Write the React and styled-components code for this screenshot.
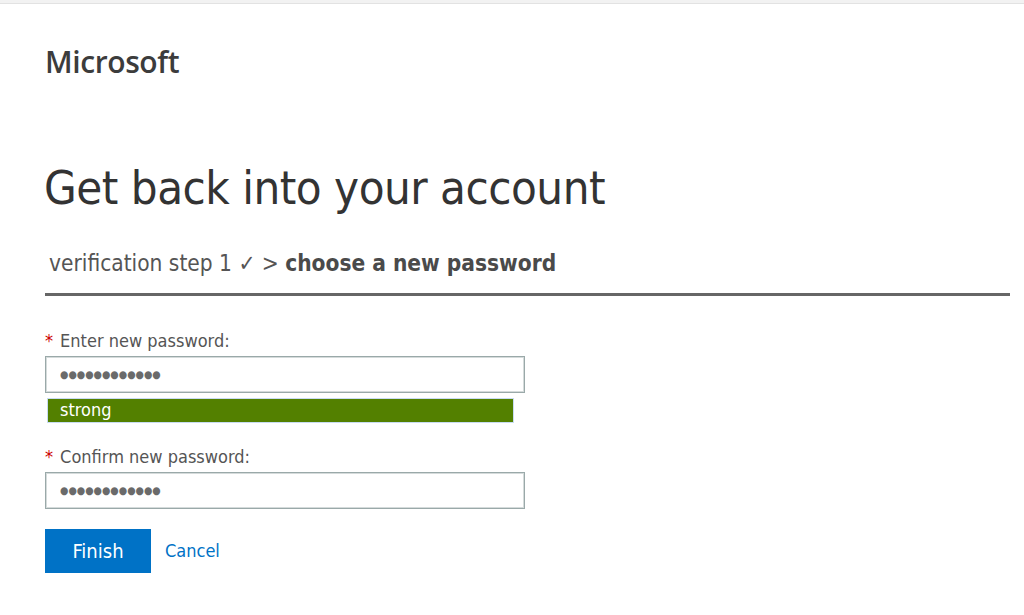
import React from 'react'
import styled, { createGlobalStyle } from 'styled-components'

const Global = createGlobalStyle`
    html, body {
        margin: 0;
        padding: 0;
        background: #fff;
    }
    body {
        font-family: "DejaVu Sans Condensed", "DejaVu Sans", sans-serif;
        color: #333;
    }
`;

const TopEdge = styled.div`
    height: 3px;
    background: #f2f2f2;
    border-bottom: 1px solid #e2e2e2;
`;

const Page = styled.div`
    padding: 0 14px 0 45px;
`;

const Logo = styled.div`
    font-family: "Open Sans", sans-serif;
    font-weight: 600;
    font-size: 30px;
    letter-spacing: -0.4px;
    color: #3c3c3c;
    line-height: 1;
    margin-top: 43px;
`;

const Title = styled.h1`
    margin: 87px 0 0 -1px;
    font-weight: 400;
    font-size: 47px;
    letter-spacing: -0.5px;
    line-height: 1;
    color: #333;
`;

const Steps = styled.div`
    margin-top: 41px;
    padding: 0 0 18px 4px;
    font-size: 22.5px;
    line-height: 1;
    color: #555;
    border-bottom: 3px solid #666;

    b {
        font-weight: 700;
        color: #4a4a4a;
    }
`;

const Form = styled.form`
    margin-top: 36px;
    width: 480px;
`;

const Field = styled.div`
    display: flex;
    flex-direction: column;
    margin-bottom: ${p => p.gap || 0}px;
`;

const Label = styled.label`
    font-size: 18px;
    line-height: 1;
    color: #555;
    margin-bottom: 6px;

    span {
        color: #c00;
        margin-right: 7px;
    }
`;

const Input = styled.input`
    box-sizing: border-box;
    width: 480px;
    height: 37px;
    border: 1px solid #9aa9a9;
    box-shadow: inset 0 0 0 1px #d5dbdb;
    padding: 0 14px;
    font-size: 10.7px;
    color: #6a6a6a;
    outline: none;
    font-family: inherit;
`;

const Strength = styled.div`
    box-sizing: border-box;
    margin: 5px 0 0 2px;
    width: 467px;
    height: 25px;
    background: #538000;
    border: 1px solid #c8dcf2;
    color: #fff;
    font-size: 18px;
    line-height: 22px;
    padding-left: 12px;
`;

const Actions = styled.div`
    display: flex;
    align-items: center;
    gap: 14px;
    margin-top: 20px;
`;

const Button = styled.button`
    width: 106px;
    height: 44px;
    border: none;
    background: #0072c6;
    color: #fff;
    font-family: inherit;
    font-size: 20px;
`;

const Link = styled.a`
    color: #0072c6;
    font-size: 18px;
    text-decoration: none;
`;

const dots = '\u25CF'.repeat(12);

export default function App() {
    return (
        <>
            <Global />
            <TopEdge />
            <Page>
                <Logo>Microsoft</Logo>
                <Title>Get back into your account</Title>
                <Steps>verification step 1 ✓ &gt; <b>choose a new password</b></Steps>
                <Form>
                    <Field gap={25}>
                        <Label><span>*</span>Enter new password:</Label>
                        <Input type="text" defaultValue={dots} />
                        <Strength>strong</Strength>
                    </Field>
                    <Field>
                        <Label><span>*</span>Confirm new password:</Label>
                        <Input type="text" defaultValue={dots} />
                    </Field>
                    <Actions>
                        <Button type="button">Finish</Button>
                        <Link href="#">Cancel</Link>
                    </Actions>
                </Form>
            </Page>
        </>
    )
}
